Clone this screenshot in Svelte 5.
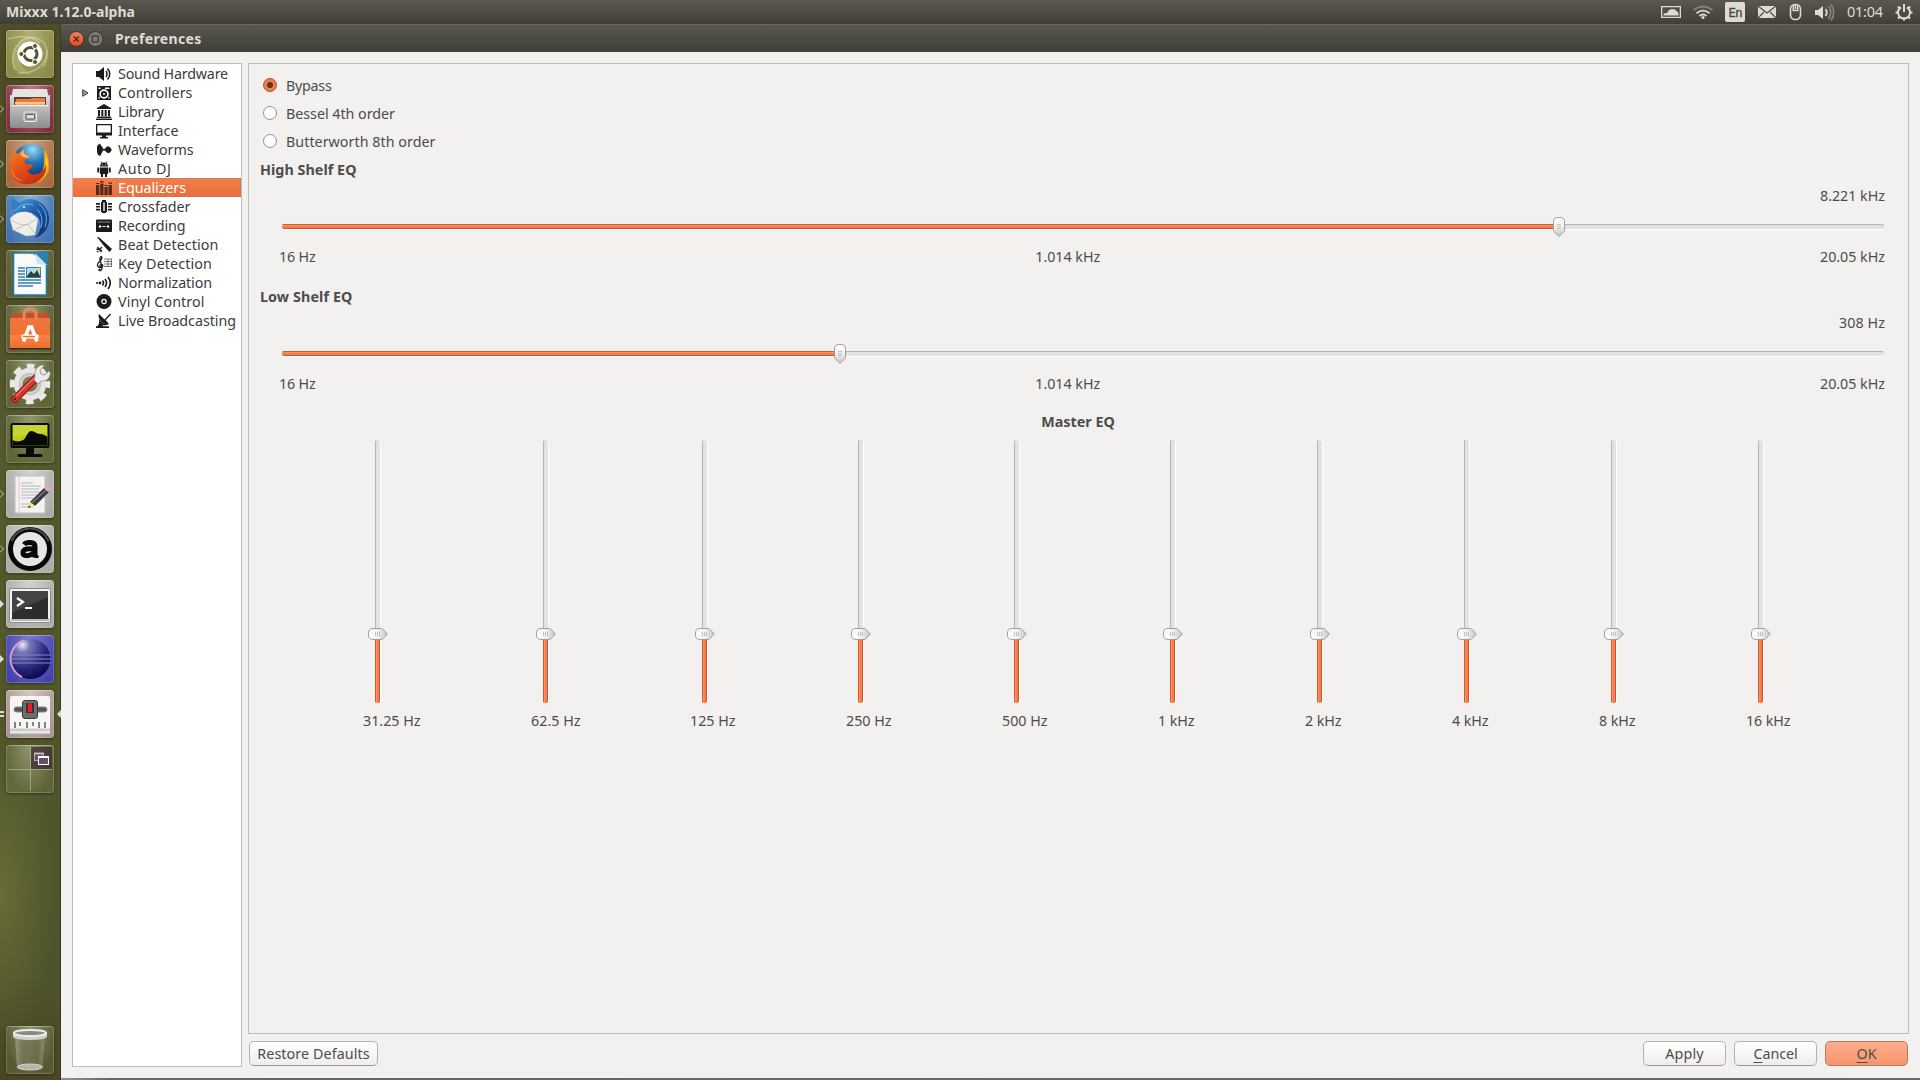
<script>
  const launcher = [
    { id: 'dash', bg: 'olive' },
    { id: 'files', bg: 'wine', left: 'open' },
    { id: 'firefox', bg: 'tan', left: 'open' },
    { id: 'mail', bg: 'blue', left: 'open' },
    { id: 'writer', bg: 'glass' },
    { id: 'software', bg: 'glass' },
    { id: 'settings', bg: 'glass' },
    { id: 'monitor', bg: 'glass' },
    { id: 'editor', bg: 'silver', left: 'open' },
    { id: 'ardour', bg: 'silver', left: 'open' },
    { id: 'terminal', bg: 'silver', left: 'solid' },
    { id: 'eclipse', bg: 'indigo', left: 'solid' },
    { id: 'mixxx', bg: 'pinkish', left: 'double', active: true },
    { id: 'workspace', bg: 'glass' },
  ];

  const pages = [
    ['sound', 'Sound Hardware', 110],
    ['controllers', 'Controllers', 74.5],
    ['library', 'Library', 46],
    ['interface', 'Interface', 60.5],
    ['waveforms', 'Waveforms', 75.5],
    ['autodj', 'Auto DJ', 53.5],
    ['eq', 'Equalizers', 68],
    ['crossfader', 'Crossfader', 72.5],
    ['recording', 'Recording', 67.5],
    ['beat', 'Beat Detection', 100.5],
    ['key', 'Key Detection', 94],
    ['normal', 'Normalization', 94],
    ['vinyl', 'Vinyl Control', 86.5],
    ['live', 'Live Broadcasting', 118],
  ];

  const modes = [
    ['Bypass', 45.5],
    ['Bessel 4th order', 109],
    ['Butterworth 8th order', 149.5],
  ];

  const shelves = [
    { title: 'High Shelf EQ', tw: 96.5, value: '8.221 kHz', vw: 65, fill: 1277 },
    { title: 'Low Shelf EQ', tw: 92.5, value: '308 Hz', vw: 46, fill: 558 },
  ];

  const bands = [
    ['31.25 Hz', 57.5],
    ['62.5 Hz', 49.5],
    ['125 Hz', 45.5],
    ['250 Hz', 45.5],
    ['500 Hz', 45.5],
    ['1 kHz', 36.5],
    ['2 kHz', 36.5],
    ['4 kHz', 36.5],
    ['8 kHz', 36.5],
    ['16 kHz', 44.5],
  ];

  // Spreads a label's letters so that it takes the given advance width.
  function track(node, width) {
    const natural = node.getBoundingClientRect().width;
    node.style.letterSpacing = `${(width - natural) / node.textContent.length}px`;
  }
</script>

{#snippet appIcon(id)}
  <svg class="app" viewBox="0 0 48 48" width="48" height="48">
    {#if id === 'dash'}
      <g fill="none" stroke="#f0f0c8" stroke-opacity=".38" stroke-width="1.500">
        <path d="M9 40C1 18 18 2 33 9c10 5 10 20 4 28" /><path d="M12 43c16 1 29-7 29-23" /><path d="M2 9c12-4 24-3 32 4" />
      </g>
      <path d="M9 40C1 18 18 2 33 9c-9-2-20 3-21 15 0 9 5 16 14 20-6 0-12-1-17-4z" fill="#eeeec4" opacity=".22" />
      <circle cx="24" cy="24" r="12.500" fill="#fff" />
      <circle cx="24.500" cy="24" r="6.500" fill="none" stroke="#56552a" stroke-width="3" stroke-dasharray="12 1.600" stroke-dashoffset="6" />
      <circle cx="15.300" cy="24" r="2.500" fill="#56552a" stroke="#fff" />
      <circle cx="29" cy="16" r="2.500" fill="#56552a" stroke="#fff" />
      <circle cx="29" cy="32" r="2.500" fill="#56552a" stroke="#fff" />
    {:else if id === 'files'}
      <defs><linearGradient id="cab" x2="0" y2="1"><stop stop-color="#e2e2e0" /><stop offset=".3" stop-color="#c2c2c0" /><stop offset="1" stop-color="#8d8d8b" /></linearGradient></defs>
      <path d="M7 4h34l3 16H4z" fill="#e4e4e2" /><path d="M8 12h32v11H8z" fill="#5d4034" />
      <path d="M10 14h14l2-1h13v9H9z" fill="#ea7d3a" /><path d="M9 17h30v2.500H9z" fill="#f7c795" />
      <path d="M4 10l4 1v9h32v-9l4-1v32l-2 1H6l-2-1z" fill="url(#cab)" />
      <path d="M6 20h36v1.200H6z" fill="#f2f2f2" />
      <rect x="18" y="27" width="12.500" height="9.500" rx="1.500" fill="#aaa" stroke="#eee" />
      <rect x="20" y="29.500" width="8.500" height="4.500" rx="1" fill="#ddd" stroke="#555" />
    {:else if id === 'firefox'}
      <defs>
        <radialGradient id="ffb" cx=".55" cy=".15" r=".8"><stop stop-color="#9fdcf4" /><stop offset=".45" stop-color="#1f74b5" /><stop offset="1" stop-color="#0b2d66" /></radialGradient>
        <linearGradient id="ffo" x2=".6" y2="1"><stop stop-color="#f08a1c" /><stop offset=".5" stop-color="#e9501a" /><stop offset="1" stop-color="#c5310f" /></linearGradient>
      </defs>
      <circle cx="25" cy="22.500" r="18.500" fill="url(#ffb)" />
      <path d="M38 10c8 11 6 26-6 32 7-9 8-19 6-32z" fill="#fbd21c" stroke="#f2960f" stroke-width="1.500" />
      <path d="M8 12c1 0 3 1 4 2l5-5c-1 3 0 5 2 6 3 0 5 1 4 3-3 1-5 2-4 5 2 2 5 1 7 1 2 2 0 4-3 5-3 3 3 7 8 5 5-1 8-5 9-10 2 10-5 18-16 20C12 46 3 38 4 26c0-6 2-10 4-14z" fill="url(#ffo)" />
      <path d="M18 9c-1 3 0 5 2 6 2 0 3 1 3 3-4 0-7-1-9-4z" fill="#f7b566" />
      <path d="M6 27c0 8 6 13 13 14-9 1-15-6-13-14z" fill="#f59a2c" opacity=".7" />
    {:else if id === 'mail'}
      <defs><linearGradient id="tb" x2=".7" y2="1"><stop stop-color="#4aa6e0" /><stop offset=".5" stop-color="#1f59aa" /><stop offset="1" stop-color="#102f6c" /></linearGradient></defs>
      <path d="M8 15C14 1 31 1 39 12c8 11 4 26-10 31 6-7 7-13 4-19-4-7-12-7-19-3-4 1-7-2-6-6z" fill="url(#tb)" />
      <path d="M4 24c4-6 12-9 21-6l7 6-3 16-9 1L7 35z" fill="#f0eee9" /><path d="M5 24c5 5 11 7 17 5l9-5M22 29L8 35M22 29l7 10" fill="none" stroke="#bdb8ae" stroke-width=".8" />
      <path d="M27 43c10-4 14-13 10-25l5 7c1 9-5 16-15 18z" fill="#163f8a" />
      <path d="M7 3c3 4 7 5 12 5L8 16C4 12 4 7 7 3z" fill="#2f7fc6" /><path d="M9 16c5-7 12-8 18-6M33 9c7 6 9 13 6 23M31 14c5 5 6 12 4 19" fill="none" stroke="#65b5e8" />
      <circle cx="18" cy="12" r="1" fill="#fff" />
    {:else if id === 'writer'}
      <path d="M7.500 3h22l11 12v30h-33z" fill="#fafafa" stroke="#1c79a8" stroke-width="1.600" />
      <path d="M25 2h17v14z" fill="#2680b0" /><path d="M29 3l12 12-10-1z" fill="#cfe3ee" />
      <path d="M12 18h7M12 21h7M12 24h7M12 27h7M12 30h23M12 33h23M12 36h15" stroke="#2b82b4" stroke-width="1.500" />
      <rect x="20.500" y="17.500" width="14" height="10" fill="#b8dcec" stroke="#2b82b4" /><path d="M21 26l4-5 3 3 3-4 3 6v1H21z" fill="#32403b" /><circle cx="33" cy="19" r="1.400" fill="#d9e23b" />
    {:else if id === 'software'}
      <defs><linearGradient id="bag" x2="0" y2="1"><stop stop-color="#ed7645" /><stop offset=".55" stop-color="#f0702e" /><stop offset=".56" stop-color="#fa8645" /><stop offset="1" stop-color="#ef6c2c" /></linearGradient></defs>
      <path d="M6 8h36v5H6z" fill="#c94f22" /><path d="M4 13h40v30H4z" fill="url(#bag)" />
      <path d="M18 15V9q0-5 6-5t6 5v6" fill="none" stroke="#e9865f" stroke-width="3" />
      <path d="M3 43h42v1.500H3z" fill="#382d1b" />
      <path d="M17.500 36.500L23 22h2.500L31 36.500" fill="none" stroke="#fff" stroke-width="3.600" /><path d="M15.500 31.500h17" stroke="#fff" stroke-width="4" /><path d="M17 31.500h12" stroke="#ef7030" stroke-width="1.500" />
    {:else if id === 'settings'}
      <circle cx="24" cy="24" r="17.500" fill="none" stroke="#e9e9e7" stroke-width="5.500" stroke-dasharray="7.500 6.244" stroke-dashoffset="3.700" />
      <circle cx="24" cy="24" r="12" fill="none" stroke="#e6e6e4" stroke-width="8.500" /><circle cx="24" cy="24" r="10" fill="none" stroke="#c4c4c2" stroke-width="2.500" />
      <path d="M9 39L31 17" stroke="#8b1714" stroke-width="7.500" stroke-linecap="round" /><path d="M9 39L31 17" stroke="#d2362e" stroke-width="5.500" stroke-linecap="round" />
      <path d="M10 36L28 18" stroke="#f0786e" stroke-width="1.300" /><circle cx="9" cy="39" r="1.200" fill="#701310" />
      <path d="M29 16c-1-6 3-11 8-11l1 1-4 4 1 4 4 1 4-4 1 1c1 6-4 10-9 9l-3 3-4-4z" fill="#eaeae8" stroke="#8e8e8a" stroke-width=".8" />
    {:else if id === 'monitor'}
      <rect x="4.500" y="8" width="39" height="25" rx="2" fill="#0a0a06" /><rect x="6.500" y="10" width="35" height="20.500" fill="#bccb20" />
      <path d="M7 10h34v7L7 22z" fill="#d2dd45" opacity=".5" /><path d="M6.500 25c3 2 9 2 12-1 3-5 4-8 7-8s5 3 8 3c4 0 5 1 8 3v8.500h-35z" fill="#080804" />
      <path d="M20 32h8v7h7c2 0 2 3 0 3H13c-2 0-2-3 0-3h7z" fill="#0a0a06" />
    {:else if id === 'editor'}
      <path d="M9 6h30v37H9z" fill="#f3f3f2" stroke="#c0c0bd" /><path d="M13 6v37" stroke="#e99d9d" stroke-width=".6" />
      <path d="M15 13h12M15 16h20M15 19h18M15 22h20M15 25h16M15 28h14M15 34h10M15 37h12" stroke="#b0b0b4" stroke-width=".9" />
      <path d="M24 32L38 18l5 4-14 14z" fill="#3a3b3b" /><path d="M26 33l14-13" stroke="#7b7c7c" stroke-width="1.200" /><path d="M38 18l3-2q4 0 3 4l-2 2z" fill="#e8a2cf" /><path d="M24 32l5 4-7 2z" fill="#f3e48f" /><path d="M22 38l1-2.500 2 1.500z" fill="#222" />
    {:else if id === 'ardour'}
      <circle cx="24" cy="24" r="19.500" fill="#e6e6e4" stroke="#080808" stroke-width="5" />
      <path d="M5.500 16A20 20 0 0 1 42.500 16" fill="none" stroke="#5a5a5a" stroke-width="2" opacity=".8" />
      <path d="M18 19.500c2-2.500 11-3.500 11 2v11M27 24c-8-1-10 1-10 4s6 4 11 0" fill="none" stroke="#080808" stroke-width="5" />
      <path d="M28 29q0 3 4.500 2.500" fill="none" stroke="#080808" stroke-width="3" />
    {:else if id === 'terminal'}
      <rect x="3.500" y="8.500" width="41" height="34" rx="1.500" fill="#f2f2f0" stroke="#888" /><path d="M5 38h38v3H5z" fill="#bababa" />
      <rect x="6" y="11" width="36" height="28" fill="#2c2d2e" /><path d="M6 11h36v6L6 33z" fill="#58595a" opacity=".55" />
      <path d="M11 18l6 4-6 4" fill="none" stroke="#fff" stroke-width="2.200" /><path d="M19 28h7" stroke="#fff" stroke-width="2" />
    {:else if id === 'eclipse'}
      <defs><radialGradient id="ecl" cx=".3" cy=".15" r=".85"><stop stop-color="#ececfa" /><stop offset=".22" stop-color="#7777ba" /><stop offset=".7" stop-color="#25257a" /><stop offset="1" stop-color="#0e0d56" /></radialGradient></defs>
      <circle cx="24.500" cy="24" r="20" fill="url(#ecl)" /><path d="M18 5A20 20 0 0 0 16 42" fill="none" stroke="#dda0c8" stroke-width="1.800" />
      <path d="M5 20h40M4.500 24h41M5 28h40" stroke="#8387cc" stroke-width="1.200" />
    {:else if id === 'mixxx'}
      <rect x="4" y="6" width="40" height="38" rx="2" fill="#f5f5f4" /><path d="M4 38.500h40V44H4z" fill="#cdcdcb" /><path d="M4 42h40" stroke="#fff" />
      <rect x="8" y="17" width="33" height="5" rx="2.500" fill="#555" stroke="#888" />
      <rect x="16.500" y="10.500" width="15" height="18" rx="2.500" fill="#6d6d6d" stroke="#3b3b3b" /><rect x="20" y="13" width="8" height="10" fill="#363636" /><rect x="22" y="13.500" width="4" height="8.500" fill="#f01d1d" />
      <path d="M9 32v6M14 32v4M21 32v6M27 32v4M33 32v6M39 32v6" stroke="#666" stroke-width="1.600" />
    {:else if id === 'workspace'}
      <path d="M25 2h21v22H25z" fill="#3d2331" opacity=".7" /><path d="M24.500 2v44M2 24.500h44" stroke="#b7b7a0" stroke-opacity=".7" />
      <rect x="28.500" y="8.500" width="9" height="7" fill="#665565" stroke="#aaa" /><path d="M28 8.500h10" stroke="#bbb" stroke-width="2" />
      <rect x="32.500" y="11.500" width="10" height="8" fill="#66505f" stroke="#fff" /><path d="M32 12h11" stroke="#fff" stroke-width="2" />
    {:else if id === 'trash'}
      <defs><linearGradient id="bin"><stop stop-color="#a9a98e" /><stop offset=".25" stop-color="#76765a" /><stop offset=".75" stop-color="#6c6c4a" /><stop offset="1" stop-color="#9a9a80" /></linearGradient></defs>
      <path d="M9 9h30l-3 33q-12 4-25 0z" fill="url(#bin)" opacity=".7" />
      <ellipse cx="24" cy="41" rx="12.500" ry="3" fill="#b4b6ae" stroke="#d2d3ce" />
      <path d="M7 6v5q2 3 17 3t17-3V6z" fill="#cfcfcd" /><ellipse cx="24" cy="7" rx="16" ry="3" fill="#8b8c80" stroke="#ececea" stroke-width="2" />
    {/if}
  </svg>
{/snippet}

{#snippet pageIcon(id)}
  <svg class="glyph" viewBox="0 0 16 16" width="16" height="16" fill="#1b1b1b" stroke="none">
    {#if id === 'sound'}
      <path d="M0 5h3l5-4v14l-5-4H0z" /><path d="M10 5q2 3 0 6M11.500 2.500q4.500 5.500 0 11" fill="none" stroke="#1b1b1b" stroke-width="1.500" />
    {:else if id === 'controllers'}
      <path d="M1 1h14v14H1z" /><circle cx="8" cy="9" r="3.900" fill="none" stroke="#fff" stroke-width="1.700" /><circle cx="8" cy="9" r="1" fill="#fff" /><path d="M2.500 2.500h2V4h-2zM9 2.500h4.500V4H9zM2.500 12h1.300v1.500H2.500zM12.200 12h1.300v1.500h-1.300z" fill="#fff" />
    {:else if id === 'library'}
      <path d="M8 0l7 4v1H1V4zM2 6h2v6H2zM5.300 6h2v6h-2zM8.700 6h2v6h-2zM12 6h2v6h-2zM1 12.500h14V14H1zM0 14.500h16V16H0z" />
    {:else if id === 'interface'}
      <path d="M0 1h16v11.500H0zM1.300 2.300v7.200h13.400V2.300z" fill-rule="evenodd" /><path d="M6 12h4v2h2v1.500H4V14h2z" />
    {:else if id === 'waveforms'}
      <path d="M1 5l1-2.500h1L4 1.500l1 2 1 1 1 2.300h2l1-1.300 1.500-1.300 2.300.8L15.500 7v1.500L14 10.500l-2 .8-2-1.600L9 8.500H7l-1 2-1 2-1 2-1-1.500H2L1 10z" />
    {:else if id === 'autodj'}
      <path d="M4 5.500q0-4 4-4t4 4zM4 6.500h8V13H4zM1.300 6.500h2v5h-2zM12.700 6.500h2v5h-2zM5 13h2v3H5zM9 13h2v3H9z" /><path d="M5 .5l1 2M11 .5l-1 2" stroke="#1b1b1b" stroke-width=".8" /><circle cx="6.300" cy="3.800" r=".6" fill="#fff" /><circle cx="9.700" cy="3.800" r=".6" fill="#fff" />
    {:else if id === 'eq'}
      <g fill="#552c1a"><path d="M0 5h3.300v10H0zM4.200 3.500h3.300V15H4.200zM8.400 7h3.300v8H8.400zM12.500 5H16v10h-3.500z" /><path d="M0 3h3.300v1H0zM4.200 1h3.300v1.500H4.200zM8.400 5h3.300v1H8.400zM12.500 2.500H16v1.300h-3.500z" /></g>
    {:else if id === 'crossfader'}
      <path d="M6 1h4v2h1v10h-1v1H6v-1H5V3h1zM7.300 3.500v8.500h1.400V3.500zM0 4h4v1.800H0zM0 7h4v1.600H0zM0 9.800h4v1.700H0zM12 4h4v1.800h-4zM12 7h4v1.600h-4zM12 9.800h4v1.700h-4z" fill-rule="evenodd" />
    {:else if id === 'recording'}
      <rect x="0" y="1.500" width="16" height="12.500" rx=".8" /><path d="M1.500 4h13" stroke="#999" stroke-width=".9" /><circle cx="4" cy="8.500" r="1.200" fill="#fff" /><circle cx="12" cy="8.500" r="1.200" fill="#fff" /><path d="M6.500 8.500h3" stroke="#fff" />
    {:else if id === 'beat'}
      <path d="M1 0l2 .3L16 12l-2.500 3L8 9z" /><path d="M1 15l5-5M1.500 10l4 5M.5 12l5.500 1.500" stroke="#1b1b1b" stroke-width="1.300" />
    {:else if id === 'key'}
      <path d="M4 15q3-1 1.500-6L3.800 3.500Q4 .5 5.500.5c1 2-.5 4-2.500 5.500-3 3-1 6 1.500 5.500C8 11 7 8 5 8.500c-1.500.5-1.500 2 0 2.200" fill="none" stroke="#1b1b1b" stroke-width="1.300" /><circle cx="3.500" cy="14" r="1.200" /><path d="M8 3h8M8 5.500h8M8 8h8M8 10.500h8M12 3v8M15.500 3v8" fill="none" stroke="#666" stroke-width=".9" />
    {:else if id === 'normal'}
      <circle cx="1" cy="8" r="1" /><circle cx="4" cy="8" r="1.400" /><path d="M6.500 5.500q2 2.500 0 5M9 4q3 4 0 8M12 2q4.500 6 0 12" fill="none" stroke="#1b1b1b" stroke-width="1.600" />
    {:else if id === 'vinyl'}
      <circle cx="8" cy="7.500" r="7.500" /><circle cx="8" cy="7.500" r="2.200" fill="none" stroke="#fff" stroke-width="1.200" />
    {:else}
      <path d="M3 1C2 7 6 12 13 11l-3-3.500L7 5z" /><path d="M3 1c-1.500 5 1.500 10.500 10 10l-4 1.500-2.500-.5 1 2H1l2-3.500z" /><path d="M9 7l5.500-6" stroke="#1b1b1b" stroke-width="1.300" /><path d="M0 13.300h13V15H0z" />
    {/if}
  </svg>
{/snippet}

{#snippet knob(kind)}
  <svg class="knob {kind}" viewBox="0 0 12 20" width="12" height="20">
    <path d="M.5 14V5Q.5.5 5 .5h2Q11.500.5 11.500 5v9L6 19.400z" fill="url(#knobFill)" stroke="#a2a09d" />
    <path d="M4 7.500h4M4 9.500h4M4 11.500h4" stroke="#b5b3b0" stroke-width=".8" />
  </svg>
{/snippet}

<svg class="defs" width="0" height="0"><defs><linearGradient id="knobFill" x2="0" y2="1"><stop stop-color="#fff" /><stop offset=".5" stop-color="#f1f1f0" /><stop offset="1" stop-color="#c4c3c1" /></linearGradient></defs></svg>

<div class="desktop">
  <header class="menubar">
    <b use:track={129}>Mixxx 1.12.0-alpha</b>
    <svg viewBox="1660 0 260 24" width="260" height="24">
      <g fill="#dfdbd2">
        <path d="M1661 6h20v12h-20zM1662.300 7.300v9.400h17.400V7.300z" fill-rule="evenodd" /><path d="M1663.500 15.500v-2l3.500-.5 2-3 3-1 3 .5 2 2 1.500 1.500v2.500z" />
        <rect x="1725" y="2" width="20" height="20" rx="2" />
        <path d="M1758 6h18v12h-18z" />
        <path d="M1815 10h3l5-4v13l-5-4h-3z" />
      </g>
      <path d="M1758 6l9 7 9-7M1758 18l6-6M1776 18l-6-6" fill="none" stroke="#504e47" stroke-width="1.300" />
      <g fill="none" stroke="#85827a" stroke-width="1.800"><path d="M1693.500 10q9.500-7 19 0M1828.500 6q4.500 6 0 13M1831 4.500q5.500 8 0 16" /></g>
      <g fill="none" stroke="#dfdbd2" stroke-width="1.800"><path d="M1696.500 13.200q6.500-5 13 0M1699.500 16q3.500-3 7 0M1825.500 9q2.500 3.500 0 7" /><rect x="1790.500" y="4.500" width="10" height="15" rx="4.500" stroke-width="1.600" /><path d="M1793.300 5v5.500h4.400V5M1795.500 5v4" stroke-width="1.500" /></g>
      <circle cx="1703" cy="17.500" r="1.500" fill="#dfdbd2" />
      <g fill="none" stroke="#dfdbd2"><path d="M1901 7.300a6 6 0 1 0 6 0" stroke-width="2" /><path d="M1904 4v8" stroke-width="2" /><path d="M1895.500 12.500h3M1909.500 12.500h3M1898 6.500l2 2M1910 6.500l-2 2M1898 18.500l2-2M1910 18.500l-2-2M1904 17.500v3" stroke-width="2.200" /></g>
      <text x="1728.500" y="17" class="lang">En</text>
      <text x="1847" y="17.200" class="clock" textLength="36">01:04</text>
    </svg>
  </header>

  <div class="work">
    <nav class="launcher">
      {#each launcher as item}
        <div class="slot">
          <div class="tile {item.bg}">{@render appIcon(item.id)}</div>
          {#if item.left}
            <svg class="pip" viewBox="0 0 5 10" width="5" height="10">
              {#if item.left === 'open'}<path d="M0 1.500L3.500 5 0 8.500" fill="none" stroke="#c9c9bb" />
              {:else if item.left === 'solid'}<path d="M0 1l4 4-4 4z" fill="#dcdcd2" />
              {:else}<path d="M0 2h4v2H0zM0 6h4v2H0z" fill="#dcdcd2" />{/if}
            </svg>
          {/if}
          {#if item.active}<svg class="pip right" viewBox="0 0 5 10" width="5" height="10"><path d="M5 1L1 5l4 4z" fill="#dcdcd2" /></svg>{/if}
        </div>
      {/each}
      <div class="slot last"><div class="tile glass">{@render appIcon('trash')}</div></div>
    </nav>

    <section class="window">
      <div class="titlebar">
        <svg viewBox="0 0 36 16" width="36" height="16">
          <defs><linearGradient id="cls" x2="0" y2="1"><stop stop-color="#f38460" /><stop offset="1" stop-color="#df4b1e" /></linearGradient></defs>
          <circle cx="8.300" cy="8" r="7.500" fill="url(#cls)" stroke="#383632" /><path d="M5.800 5.500l5 5m0-5l-5 5" stroke="#4a2618" stroke-width="1.200" />
          <circle cx="27.300" cy="8" r="7.500" fill="#7d7a70" stroke="#383632" /><rect x="24.300" y="5" width="6" height="6" fill="none" stroke="#3a3833" stroke-width="1.200" />
        </svg>
        <b use:track={86.500}>Preferences</b>
      </div>

      <div class="body">
        <aside class="tree">
          {#each pages as [id, name, width]}
            <div class="row" class:selected={id === 'eq'}>
              <span class="arrow">{#if id === 'controllers'}<svg viewBox="0 0 7 8" width="7" height="8"><path d="M.7.700L6 4 .7 7.300z" fill="#999" stroke="#444" /></svg>{/if}</span>
              {@render pageIcon(id)}
              <span class="name"><span use:track={width}>{name}</span></span>
            </div>
          {/each}
        </aside>

        <div class="main">
          <div class="panel">
            <div class="modes">
              {#each modes as [name, width], i}
                <div class="mode"><i class="radio" class:on={i === 0}></i><span use:track={width}>{name}</span></div>
              {/each}
            </div>

            {#each shelves as s}
              <div class="shelf">
                <div class="title"><b use:track={s.tw}>{s.title}</b></div>
                <div class="value"><span use:track={s.vw}>{s.value}</span></div>
                <div class="hslider">
                  <div class="groove"><div class="fill" style:width="{s.fill}px"></div></div>
                  <div class="thumb" style:left="{s.fill - 6}px">{@render knob('down')}</div>
                </div>
                <div class="scale"><span use:track={36.500}>16 Hz</span><span use:track={65}>1.014 kHz</span><span use:track={65}>20.05 kHz</span></div>
              </div>
            {/each}

            <div class="master"><b use:track={73.500}>Master EQ</b></div>
            <div class="bands">
              {#each bands as [name, width]}
                <div class="band">
                  <div class="vslider"><div class="vfill"></div><div class="vthumb">{@render knob('side')}</div></div>
                  <div class="hz"><span use:track={width}>{name}</span></div>
                </div>
              {/each}
            </div>
          </div>

          <footer class="buttons">
            <button class="restore"><span use:track={112.500}>Restore Defaults</span></button>
            <button class="first"><span use:track={38.500}>Apply</span></button>
            <button><span use:track={44}><u>C</u>ancel</span></button>
            <button class="ok"><span use:track={20}><u>O</u>K</span></button>
          </footer>
        </div>
      </div>
      <div class="edge"></div>
    </section>
  </div>
</div>

<style>
  :global(body) { margin: 0; overflow: hidden; }
  * { box-sizing: border-box; }
  span, b { white-space: nowrap; }
  .defs { display: block; position: absolute; }
  .desktop { width: 1920px; height: 1080px; display: flex; flex-direction: column; font: 14.300px/19px 'Noto Sans', 'Open Sans', sans-serif; color: #4c4c4c; background: #4d4f27; overflow: hidden; }
  .menubar { height: 24px; flex: none; display: flex; align-items: center; justify-content: space-between; padding-left: 6px; color: #dfdbd2; background: linear-gradient(#5a584e, #45443e 80%, #3f3e39); font-size: 14px; }
  .menubar b { margin-bottom: 2px; }
  .lang { font: 12.500px Roboto, sans-serif; fill: #4a4842; stroke: #4a4842; stroke-width: .3px; }
  .clock { font: 14.500px 'Noto Sans', sans-serif; fill: #dfdbd2; }
  .work { flex: 1; display: flex; min-height: 0; }
  .launcher { width: 61px; flex: none; padding: 6px 0 6px 6px; display: flex; flex-direction: column; gap: 7px; background: radial-gradient(ellipse 55px 150px at 0 870px, rgba(112, 116, 56, .75), transparent), linear-gradient(#504c24, #4c4b26 20%, #555a2e 38%, #535729 60%, #50562c 76%, #4f532b 90%, #484722); border-right: 1px solid #35392f; }
  .slot { position: relative; width: 48px; height: 48px; flex: none; }
  .last { margin-top: auto; }
  .tile { width: 48px; height: 48px; border-radius: 4px; overflow: hidden; box-shadow: inset 0 0 0 1px rgba(255, 255, 255, .18), inset 0 1px rgba(255, 255, 255, .2), 0 1px 3px rgba(0, 0, 0, .4); }
  .app { display: block; }
  .olive { background: radial-gradient(ellipse at 50% 0, #b0b078, #8b8a47 85%); }
  .wine { background: radial-gradient(ellipse at 50% 0, #bb7c86, #812f3f 85%); }
  .tan { background: radial-gradient(ellipse at 50% 0, #cba687, #aa6a40 85%); }
  .blue { background: radial-gradient(ellipse at 50% 0, #8fb0d2, #3e72b0 85%); }
  .glass { background: radial-gradient(ellipse at 50% 0, rgba(190, 195, 160, .6), rgba(150, 155, 105, .2) 75%); }
  .silver { background: radial-gradient(ellipse at 50% 0, #d2d2cf, #adaba8 85%); }
  .indigo { background: radial-gradient(ellipse at 50% 0, #7c7ccc, #4343ae 85%); }
  .pinkish { background: radial-gradient(ellipse at 50% 0, #d6c8c5, #a69592 85%); }
  .pip { position: absolute; left: -6px; top: 19px; }
  .pip.right { left: 50px; }
  .window { flex: 1; display: flex; flex-direction: column; background: #f2f1f0; min-width: 0; }
  .titlebar { height: 28px; flex: none; display: flex; align-items: center; gap: 10px; padding: 0 0 0 7px; color: #dfdbd2; border-top: 1px solid #6b685d; background: linear-gradient(#5a584e, #3e3d38); font-size: 14px; }
  .titlebar svg { margin-right: 1px; }
  .body { flex: 1; display: flex; gap: 6px; padding: 11px 11px 11px 11px; min-height: 0; }
  .tree { width: 170px; border: 1px solid #bfbdba; background: #fff; color: #3c3c3c; }
  .row { height: 19px; display: flex; align-items: center; }
  .arrow { width: 23px; padding-left: 9px; line-height: 0; }
  .glyph { flex: none; }
  .name { flex: 1; height: 19px; margin-left: 4px; padding-left: 2px; }
  .selected { color: #fff; background: linear-gradient(#f2804e, #ea6d3a); }
  .selected .name { outline: 1px dotted #a5836e; outline-offset: -1px; }
  .main { flex: 1; display: flex; flex-direction: column; min-width: 0; }
  .panel { height: 971px; border: 1px solid #bfbdba; padding: 7px 23px 0 11px; }
  .mode { height: 28px; display: flex; align-items: center; gap: 9px; padding-left: 3px; }
  .radio { width: 14px; height: 14px; border-radius: 50%; background: #fff; border: 1px solid #94928e; }
  .radio.on { background: radial-gradient(circle, #683720 0 2.800px, #f18356 3.500px, #ee7445 6px); border-color: #b45230; }
  .modes { padding-bottom: 1px; }
  .shelf { height: 127px; display: flex; flex-direction: column; }
  .title { height: 26px; padding-top: 4px; line-height: 20px; margin-bottom: 4px; }
  .value { height: 20px; text-align: right; line-height: 20px; }
  .hslider { position: relative; height: 20px; margin: 11px 0 10px 22px; padding-top: 7px; width: 1602px; }
  .groove { height: 5px; border-radius: 2px; background: #e3e2e0; border-top: 1px solid #b5b4b1; box-shadow: 0 1px #fff; }
  .fill { height: 5px; transform: translateY(-1px); border-radius: 2px 0 0 2px; background: linear-gradient(#d9592a 1px, #f99468 1px 2px, #f27d4d 2px 4px, #d0562a 4px); }
  .thumb { position: absolute; top: 0; line-height: 0; }
  .scale { display: flex; justify-content: space-between; padding-left: 19px; line-height: 19px; }
  .master { height: 26px; margin-top: 2px; text-align: center; padding-left: 11px; }
  .bands { display: grid; grid-template-columns: 168px 159px 156px 156px 156px 147px 147px 147px 147px 100px; padding-left: 103px; margin-top: 2px; }
  .vslider { position: relative; width: 5px; height: 263px; margin-left: 12px; border-radius: 2px; background: #e3e2e0; border-left: 1px solid #b5b4b1; box-shadow: 1px 0 #fff; }
  .vfill { width: 5px; height: 69px; margin: 0 0 0 -1px; transform: translateY(194px); border-radius: 0 0 2px 2px; background: linear-gradient(90deg, #d9592a 1px, #f99468 1px 2px, #f27d4d 2px 4px, #d0562a 4px); }
  .vthumb { position: absolute; left: -4px; top: 184px; line-height: 0; }
  .knob.side { transform: rotate(-90deg); }
  .hz { margin-top: 8px; }
  .buttons { display: flex; gap: 8px; padding: 7px 0 0 1px; }
  button { width: 83px; height: 25px; padding: 0; border: 1px solid #b4b2af; border-bottom-color: #9a9895; border-radius: 5px; font: inherit; line-height: 20px; color: #4c4c4c; background: linear-gradient(#fff, #efeeed); }
  .restore { width: 129px; }
  .first { margin-left: auto; }
  .ok { border-color: #b8795f; background: linear-gradient(#ffae8b, #f4956d); margin-right: 1px; }
  u { text-underline-offset: 3px; text-decoration-thickness: 1px; }
  .edge { height: 2px; background: linear-gradient(90deg, #8a96a5, #62676d 50px, #666b71); }
</style>
